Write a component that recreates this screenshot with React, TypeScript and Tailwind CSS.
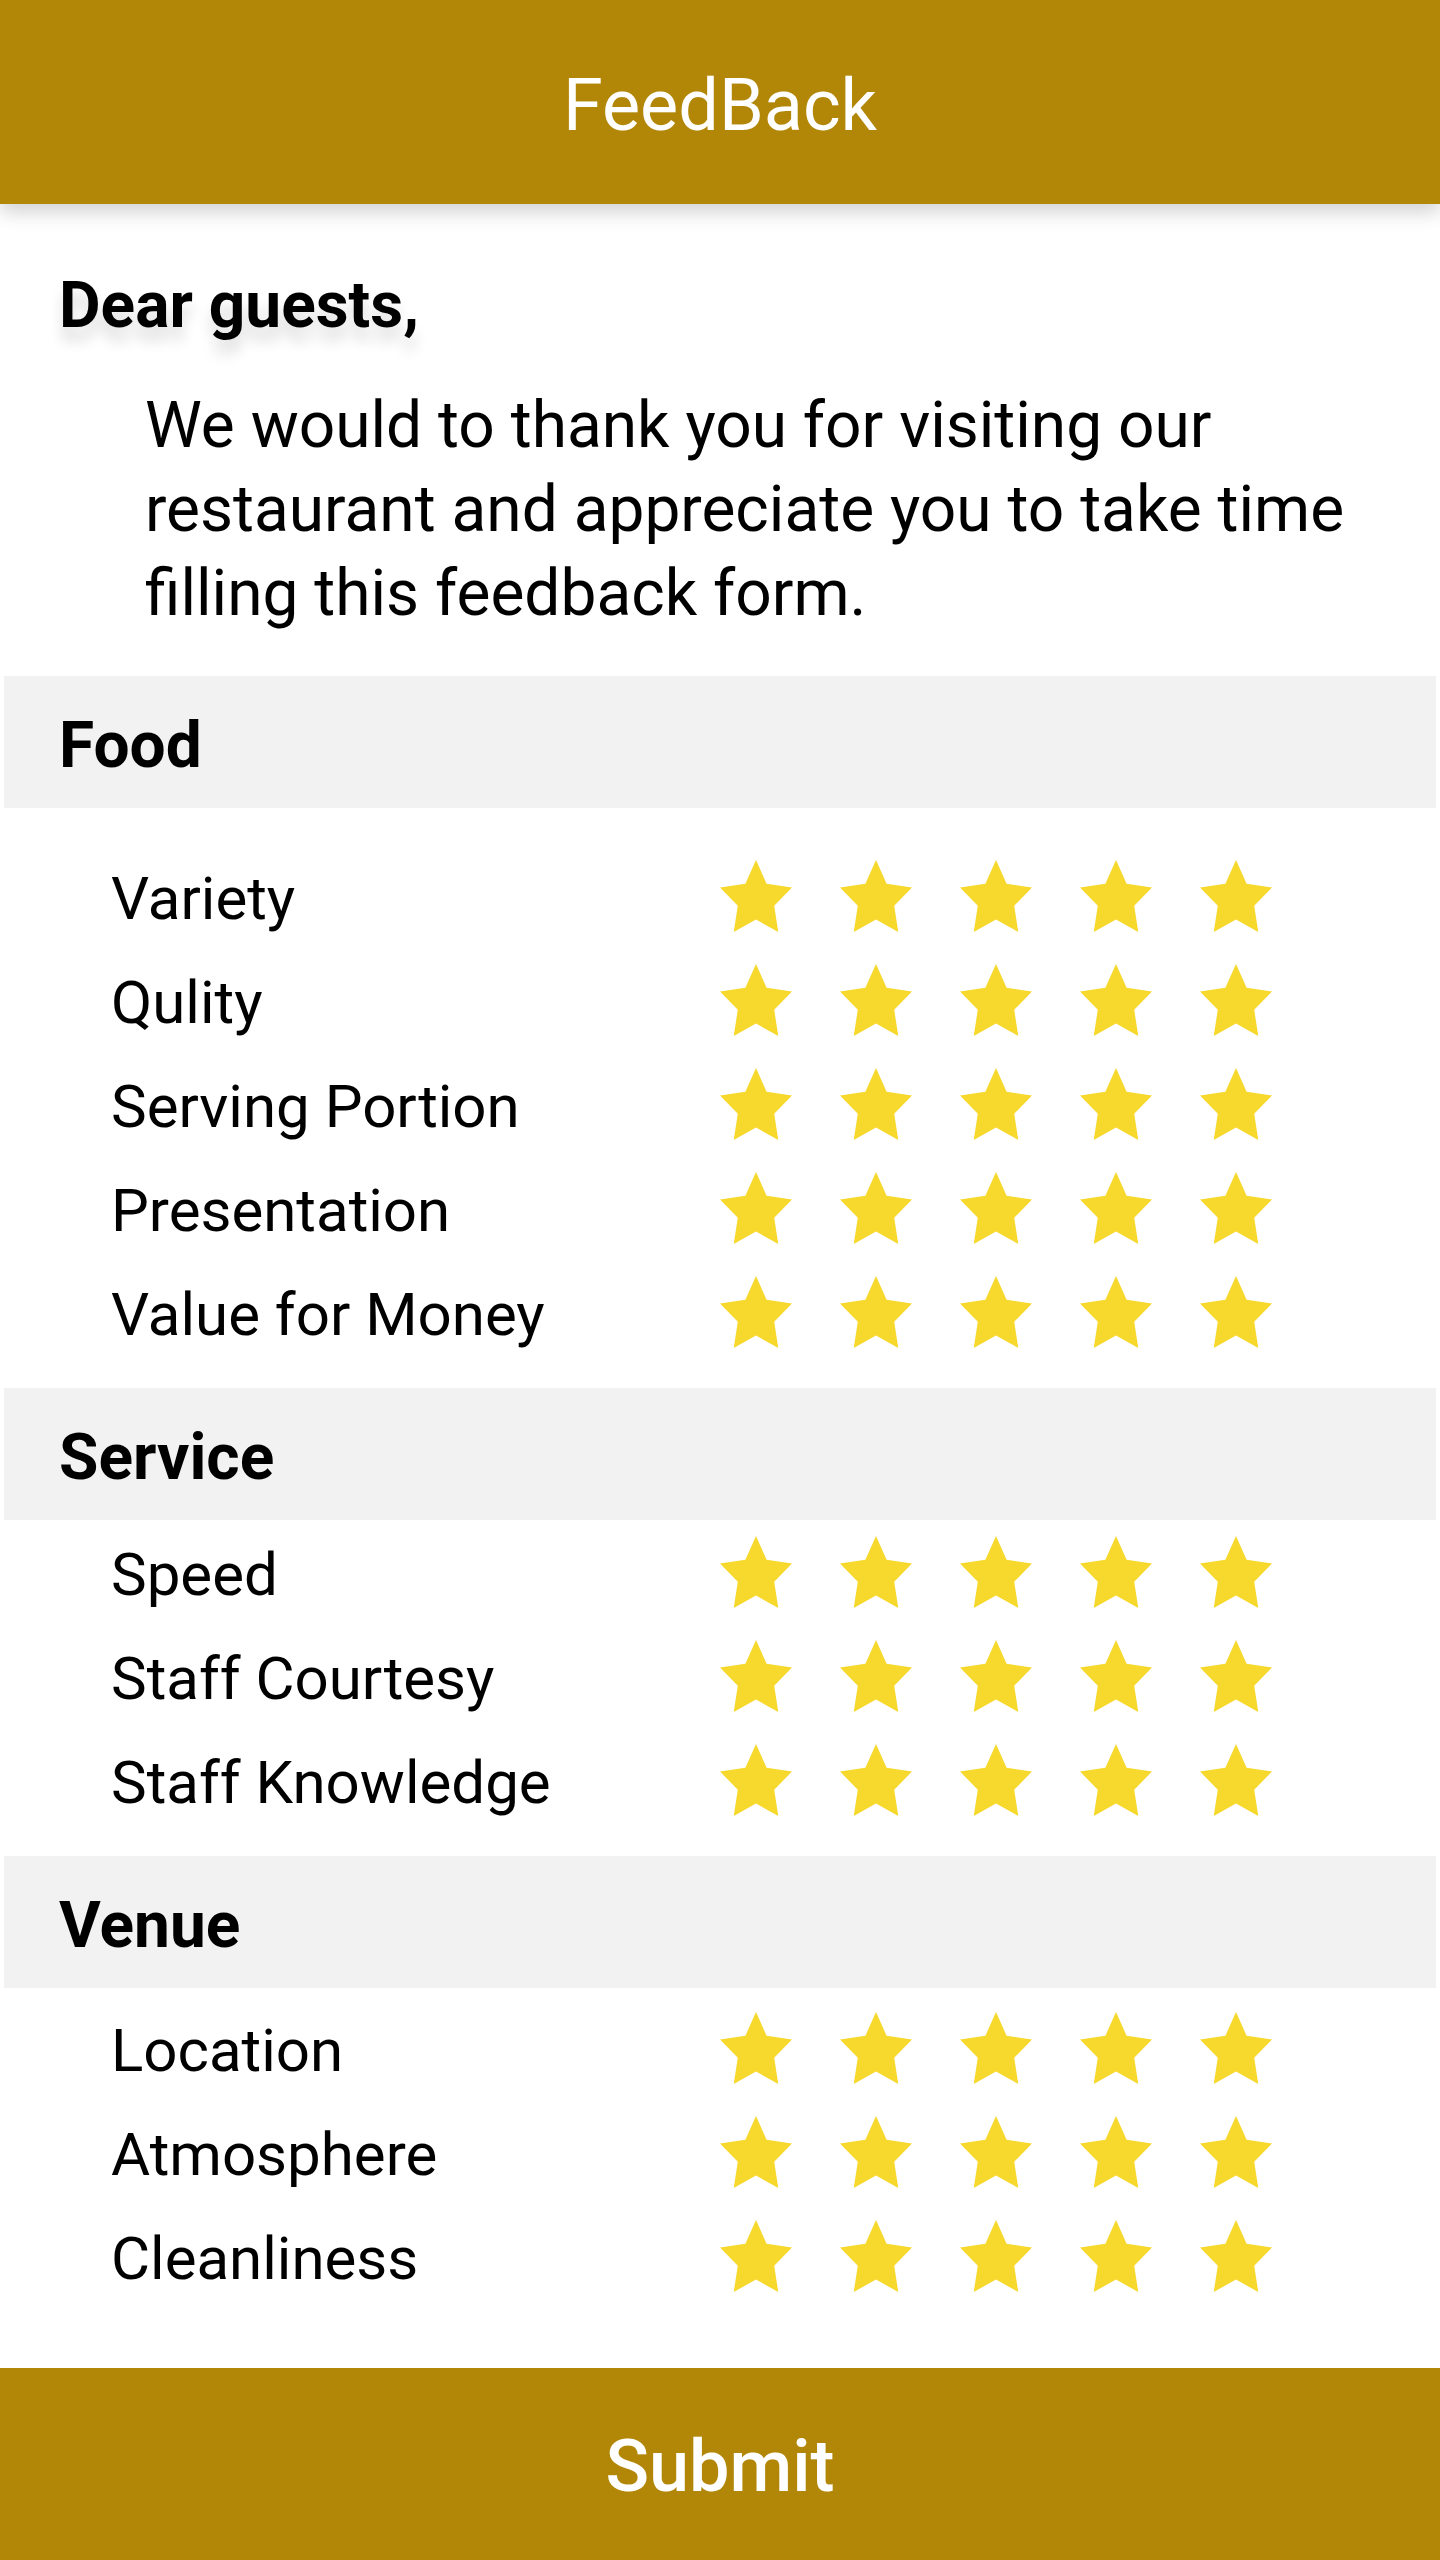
import React from "react";

type Section = {
  title: string;
  gapTop: string;
  rowsTop: string;
  items: string[];
};

const sections: Section[] = [
  {
    title: "Food",
    gapTop: "mt-[40px]",
    rowsTop: "mt-[36px]",
    items: ["Variety", "Qulity", "Serving Portion", "Presentation", "Value for Money"],
  },
  {
    title: "Service",
    gapTop: "mt-[24px]",
    rowsTop: "mt-0",
    items: ["Speed", "Staff Courtesy", "Staff Knowledge"],
  },
  {
    title: "Venue",
    gapTop: "mt-[24px]",
    rowsTop: "mt-[8px]",
    items: ["Location", "Atmosphere", "Cleanliness"],
  },
];

function Star() {
  return (
    <svg width="72" height="72" viewBox="0 0 72 72" className="shrink-0">
      <polygon
        points="36,0 46.6,23.8 72,27.4 54.2,45.8 58.3,72 36,59.6 13.7,72 17.8,45.8 0,27.4 25.4,23.8"
        fill="#f7d82c"
      />
    </svg>
  );
}

function RatingRow({ label }: { label: string }) {
  return (
    <div className="flex h-[104px] items-center pl-[111px]">
      <span className="w-[609px] pt-[6px] text-[60px] leading-none text-black">{label}</span>
      <div className="flex gap-[48px]">
        <Star />
        <Star />
        <Star />
        <Star />
        <Star />
      </div>
    </div>
  );
}

export default function App() {
  return (
    <div className="w-[1440px] h-[2560px] bg-white font-['Roboto',sans-serif] text-black flex flex-col">
      <header className="relative z-10 h-[204px] shrink-0 bg-[#b28708] flex items-center justify-center pt-[8px] shadow-[0_8px_18px_rgba(0,0,0,0.18)]">
        <h1 className="text-[72px] font-normal text-white leading-none">FeedBack</h1>
      </header>

      <p className="mt-[64px] pl-[59px] text-[64px] leading-[76px] font-bold [text-shadow:0_14px_14px_rgba(0,0,0,0.13)]">
        Dear guests,
      </p>
      <p className="mt-[40px] pl-[145px] pr-[40px] text-[64px] leading-[84px]">
        We would to thank you for visiting our restaurant and appreciate you to take time
        filling this feedback form.
      </p>

      {sections.map((s) => (
        <section key={s.title}>
          <div
            className={`${s.gapTop} mx-1 h-[132px] bg-[#f2f2f2] pt-[32px] pl-[55px] text-[64px] leading-[76px] font-bold`}
          >
            {s.title}
          </div>
          <div className={s.rowsTop}>
            {s.items.map((item) => (
              <RatingRow key={item} label={item} />
            ))}
          </div>
        </section>
      ))}

      <button className="mt-[60px] h-[192px] w-full shrink-0 bg-[#b28708] pt-[6px] text-[72px] font-medium text-white leading-none">
        Submit
      </button>
    </div>
  );
}
